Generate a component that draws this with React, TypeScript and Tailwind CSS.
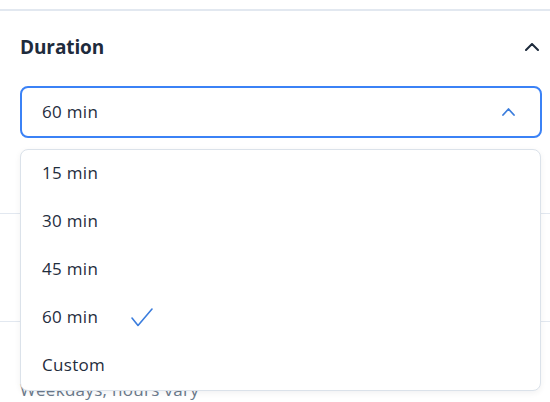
import React from 'react';

const options = ['15 min', '30 min', '45 min', '60 min', 'Custom'];

const ChevronUp = ({ className, width = 14, height = 8, stroke = 2 }: { className?: string; width?: number; height?: number; stroke?: number }) => (
  <svg width={width} height={height} viewBox={`0 0 ${width} ${height}`} fill="none" className={className}>
    <polyline
      points={`1,${height - 1} ${width / 2},1 ${width - 1},${height - 1}`}
      stroke="currentColor"
      strokeWidth={stroke}
      strokeLinecap="round"
      strokeLinejoin="round"
    />
  </svg>
);

const Check = () => (
  <svg width="22" height="19" viewBox="0 0 22 19" fill="none" className="text-[#3b7ddd]">
    <polyline points="1,10 7,17.5 21,1" stroke="currentColor" strokeWidth="1.6" strokeLinecap="round" strokeLinejoin="round" />
  </svg>
);

export default function App() {
  const selected = '60 min';

  return (
    <div className="w-[550px] h-[402px] overflow-hidden bg-white font-['Open_Sans',sans-serif] text-[#1f2d3d]">
      <div className="h-[9px]" />

      {/* Duration */}
      <section className="relative border-t-2 border-[#e2e8f0] pl-5 pr-2 pt-[24px] h-[204px]">
        <div className="flex items-center justify-between h-6 pr-[3px]">
          <h2 className="text-[19px] font-bold text-[#1e2b3c] tracking-[-0.1px]">Duration</h2>
          <ChevronUp className="text-[#1e2b3c]" />
        </div>

        <div className="mt-[27px] h-[52px] rounded-lg border-2 border-[#3b82f6] flex items-center justify-between pl-5 pr-[25px]">
          <span className="text-[17px] leading-6 tracking-[0.3px]">{selected}</span>
          <ChevronUp className="text-[#3b7ddd]" width={13} height={8} stroke={1.8} />
        </div>

        <ul className="absolute left-5 right-[9px] top-[138px] z-10 rounded-lg border border-[#dbe2ea] bg-white shadow-[0_2px_6px_rgba(15,23,42,0.06)]">
          {options.map((opt) => (
            <li key={opt} className="h-12 flex items-center gap-[33px] pl-[21px] pb-[2px] text-[17px] leading-6 tracking-[0.3px]">
              <span>{opt}</span>
              {opt === selected && <Check />}
            </li>
          ))}
        </ul>
      </section>

      {/* Location */}
      <section className="border-t border-[#e2e8f0] h-[108px]" />

      {/* Availability */}
      <section className="border-t border-[#e2e8f0] pl-5 pt-[56px]">
        <p className="text-[17px] leading-6 tracking-[0.3px] text-[#6b7a8c]">Weekdays, hours vary</p>
      </section>
    </div>
  );
}
